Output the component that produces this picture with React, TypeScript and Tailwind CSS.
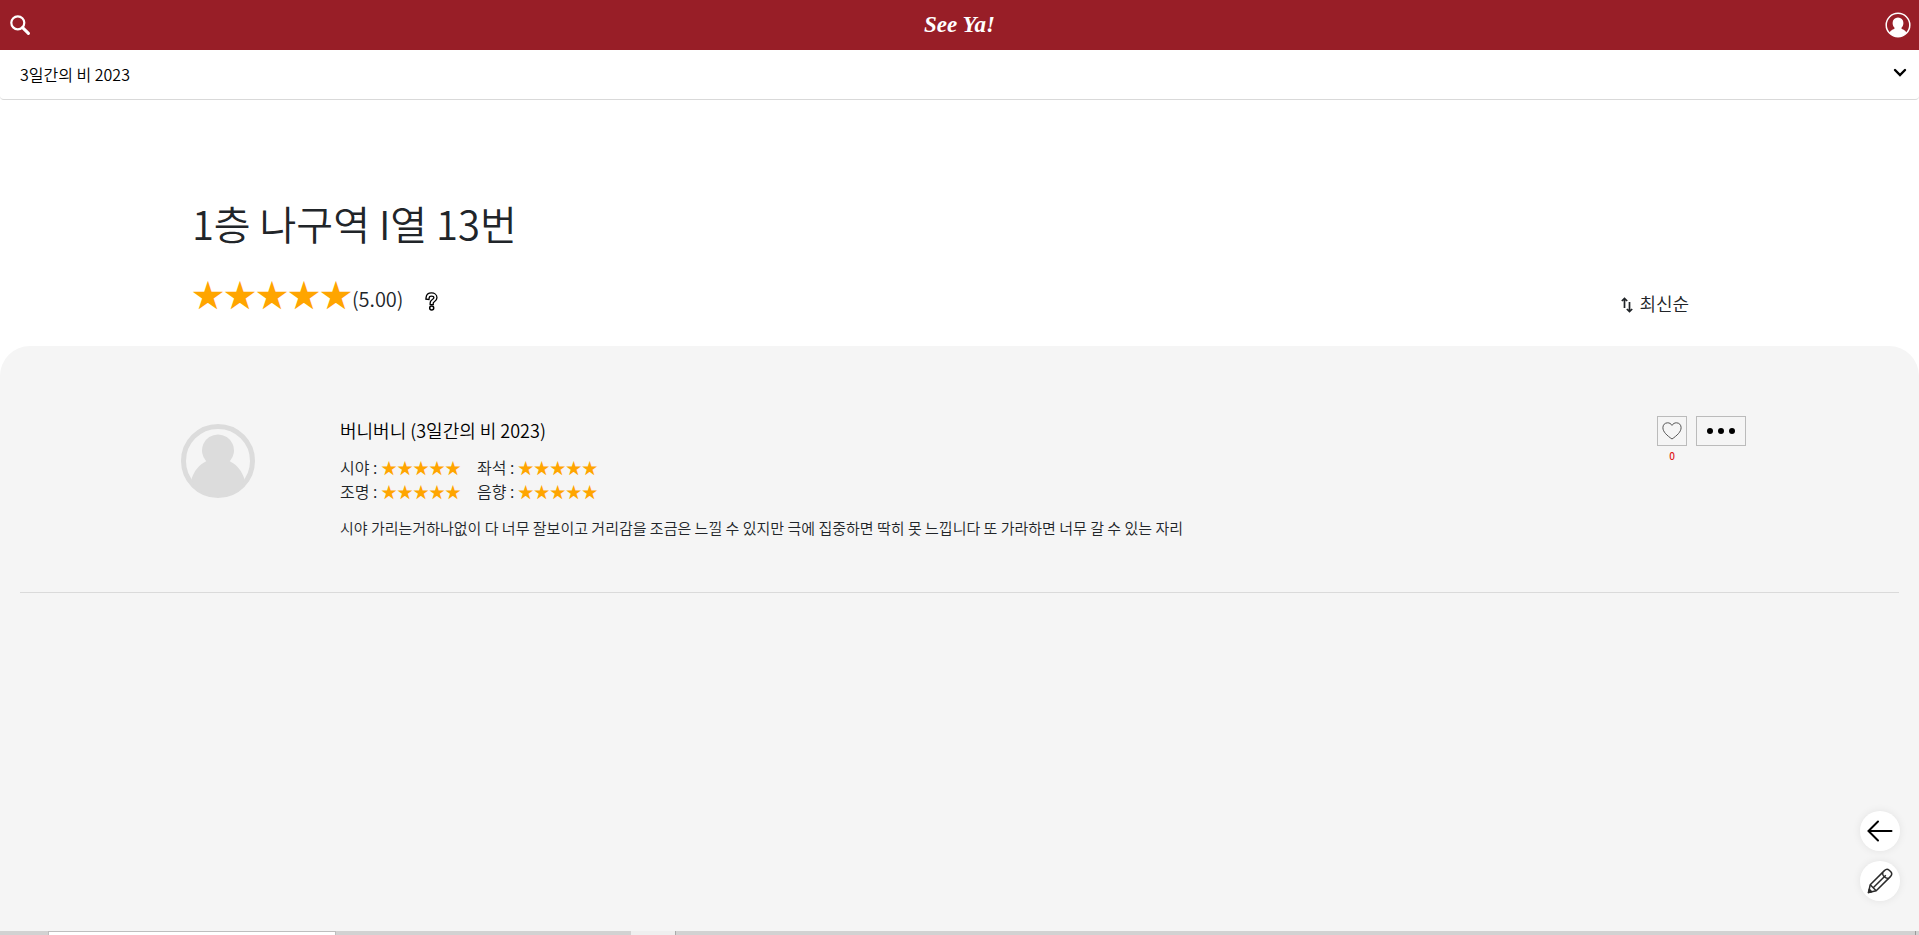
const STARS = "★★★★★";

const ratings = [
  { label: "시야", stars: STARS },
  { label: "좌석", stars: STARS },
  { label: "조명", stars: STARS },
  { label: "음향", stars: STARS },
];

function SearchIcon() {
  return (
    <svg width="20" height="20" viewBox="0 0 20 20" fill="none" stroke="#fff" aria-hidden="true">
      <circle cx="7.8" cy="7.8" r="6.5" strokeWidth="2.2" />
      <path d="M12.6 12.6L18.4 18.4" strokeWidth="3" strokeLinecap="round" />
    </svg>
  );
}

function ProfileIcon() {
  return (
    <svg width="26" height="26" viewBox="0 0 26 26" aria-hidden="true">
      <circle cx="13" cy="13" r="11.8" fill="none" stroke="#fff" strokeWidth="1.5" />
      <path
        fill="#fff"
        d="M13 5.4a5.4 5.6 0 0 1 5.4 5.7c0 2.200-.9 4-2.100 5 .3 1 1.600 1.300 3 2.100 1.200.6 1.900 1.700 2.200 2.800A11.900 11.900 0 0 1 13 24.900 11.900 11.900 0 0 1 4.500 21c.3-1.100 1-2.200 2.200-2.800 1.400-.8 2.700-1.100 3-2.100-1.200-1-2.100-2.800-2.100-5A5.400 5.600 0 0 1 13 5.400z"
      />
    </svg>
  );
}

function Avatar() {
  return (
    <svg className="block" width="74" height="74" viewBox="0 0 74 74" aria-hidden="true">
      <circle cx="37" cy="37" r="34.500" fill="none" stroke="#dcdcdc" strokeWidth="5" />
      <path
        fill="#dcdcdc"
        d="M37 10.500a16 16 0 0 1 11.800 26.800c7 3.400 12.300 9.700 14.700 18L61 62A34.500 34.500 0 0 1 13 62l-2.500-6.700c2.400-8.300 7.700-14.600 14.700-18A16 16 0 0 1 37 10.500z"
      />
    </svg>
  );
}

function HelpIcon() {
  const hook = "M2.600 5.800C2.800 3.700 4.300 2.500 6.500 2.500c2.300 0 3.900 1.300 3.900 3.200 0 2.800-3.700 2.700-3.700 5.300";
  return (
    <svg width="13" height="19" viewBox="0 0 13 19" fill="none" aria-hidden="true">
      <path d={hook} stroke="#000" strokeWidth="4.400" strokeLinecap="square" />
      <path d={hook} stroke="#fff" strokeWidth="1.800" strokeLinecap="square" />
      <circle cx="6.700" cy="16" r="2" stroke="#000" strokeWidth="1.500" fill="#fff" />
    </svg>
  );
}

function SortIcon() {
  return (
    <svg className="mt-1" width="12" height="16" viewBox="0 0 12 16" fill="none" stroke="#212529" strokeWidth="1.700" aria-hidden="true">
      <path d="M3.500 11V2M.8 4l2.700-2.600L6.200 4M8.500 5v9M5.800 12l2.700 2.600 2.700-2.600" />
    </svg>
  );
}

function HeartIcon() {
  return (
    <svg width="20" height="18" viewBox="0 0 20 18" fill="none" stroke="#555" strokeWidth="1" aria-hidden="true">
      <path d="M10 3.400C8.900 1.600 7.400.8 5.600.8 2.800.8.9 2.900.9 5.700c0 4.200 4.300 8 9.100 11.300 4.800-3.300 9.100-7.100 9.100-11.300 0-2.800-1.900-4.900-4.700-4.900-1.800 0-3.300.8-4.400 2.600z" />
    </svg>
  );
}

function PencilIcon() {
  return (
    <svg width="26" height="26" viewBox="0 0 26 26" fill="none" stroke="#2b2b2b" strokeWidth="1.500" strokeLinejoin="round" aria-hidden="true">
      <path d="M1.500 24.500l1.700-7.700L17.400 2.600c1.600-1.600 3.300-1.700 4.800-.4l1.600 1.600c1.300 1.500 1.200 3.200-.4 4.800L9.200 22.800z" />
      <path d="M3.200 16.800l6 6M6.200 19.800L18.800 7.200M15.600 4.400c-.3 3.500 2.500 6.300 6 6" />
      <path d="M1.500 24.500l.8-3.200 2.400 2.400z" fill="#2b2b2b" />
    </svg>
  );
}

export default function App() {
  return (
    <div className="flex min-h-screen flex-col bg-white font-['Noto_Sans_CJK_KR','Noto_Sans',sans-serif] font-[350] text-[#212529]">
      <header className="grid h-[50px] grid-cols-3 items-center bg-[#981e27] px-2">
        <button type="button" aria-label="검색" className="justify-self-start p-0.5">
          <SearchIcon />
        </button>
        <a
          href="#home"
          className="justify-self-center font-['Liberation_Serif',serif] text-[23px] leading-8 font-bold text-white italic"
        >
          See Ya!
        </a>
        <button type="button" aria-label="내 정보" className="justify-self-end">
          <ProfileIcon />
        </button>
      </header>

      <button
        type="button"
        className="flex h-[50px] items-center justify-between rounded-b border-b border-[#d9d9d9] px-5 pb-0.5 text-left text-base text-black"
      >
        3일간의 비 2023
        <svg className="-mr-2 mb-0.5" width="14" height="10" viewBox="0 0 14 10" fill="none" stroke="#000" strokeWidth="2.400" aria-hidden="true">
          <path d="M2 2l5 5 5-5" strokeLinecap="round" />
        </svg>
      </button>

      <section className="px-[10%] pt-[93px] pb-[29px]">
        <h1 className="text-[40px] leading-[60px]">1층 나구역 I열 13번</h1>
        <div className="mt-4 flex items-end justify-between pr-[38px]">
          <div className="flex items-center">
            <span className="text-[32px] leading-[48px] text-[#ffa500]">{STARS}</span>
            <span className="pt-3 text-xl">(5.00)</span>
            <button type="button" aria-label="도움말" className="mt-4 ml-[22px]">
              <HelpIcon />
            </button>
          </div>
          <button type="button" className="flex items-center gap-1.5 text-lg">
            <SortIcon />
            최신순
          </button>
        </div>
      </section>

      <main className="flex-1 rounded-t-[30px] bg-[#f5f5f5] px-5">
        <article className="flex items-start border-b border-[#dadada] pt-[70px] pr-[153px] pb-[52px] pl-[161px]">
          <div className="mt-2 mr-[85px] shrink-0">
            <Avatar />
          </div>
          <div className="min-w-0 flex-1">
            <h2 className="text-lg leading-7 text-black">버니버니 (3일간의 비 2023)</h2>
            <div className="mt-[11px] grid w-max grid-cols-2 gap-x-4 text-base leading-6">
              {ratings.map((r) => (
                <div key={r.label}>
                  {r.label} : <span className="text-[#ffa500]">{r.stars}</span>
                </div>
              ))}
            </div>
            <p className="mt-[13px] text-[15px] leading-6">
              시야 가리는거하나없이 다 너무 잘보이고 거리감을 조금은 느낄 수 있지만 극에 집중하면 딱히 못 느낍니다 또 가라하면 너무 갈 수 있는 자리
            </p>
          </div>
          <div className="flex items-start gap-[9px]">
            <div className="flex flex-col items-center">
              <button
                type="button"
                aria-label="좋아요"
                className="flex h-[30px] w-[30px] items-center justify-center border border-[#bbb]"
              >
                <HeartIcon />
              </button>
              <span className="mt-0.5 text-[10px] leading-4 font-medium text-[#e02020]">0</span>
            </div>
            <button
              type="button"
              aria-label="더보기"
              className="flex h-[30px] w-[50px] items-center justify-center gap-[5px] border border-[#bbb]"
            >
              <span className="h-1.5 w-1.5 rounded-full bg-black" />
              <span className="h-1.5 w-1.5 rounded-full bg-black" />
              <span className="h-1.5 w-1.5 rounded-full bg-black" />
            </button>
          </div>
        </article>
      </main>

      <footer className="flex h-1 bg-[#d2d2d2]">
        <div className="ml-12 w-[288px] border-x border-t border-[#bebebe] bg-white" />
        <div className="ml-[295px] w-[45px] border-r border-[#aaa] bg-[#efefef]" />
        <div className="ml-auto w-1 border-l border-[#999]" />
      </footer>

      <div className="fixed right-[19px] bottom-[34px] flex flex-col gap-2.5">
        <button
          type="button"
          aria-label="뒤로"
          className="flex h-10 w-10 items-center justify-center rounded-full bg-white shadow-[0_0_8px_rgba(0,0,0,0.08)]"
        >
          <svg width="26" height="22" viewBox="0 0 26 22" fill="none" stroke="#000" strokeWidth="2" aria-hidden="true">
            <path d="M1.500 11H24.500M11 1.500L1.500 11l9.500 9.500" strokeLinecap="round" />
          </svg>
        </button>
        <button
          type="button"
          aria-label="리뷰 쓰기"
          className="flex h-10 w-10 items-center justify-center rounded-full bg-white shadow-[0_0_8px_rgba(0,0,0,0.08)]"
        >
          <PencilIcon />
        </button>
      </div>
    </div>
  );
}
